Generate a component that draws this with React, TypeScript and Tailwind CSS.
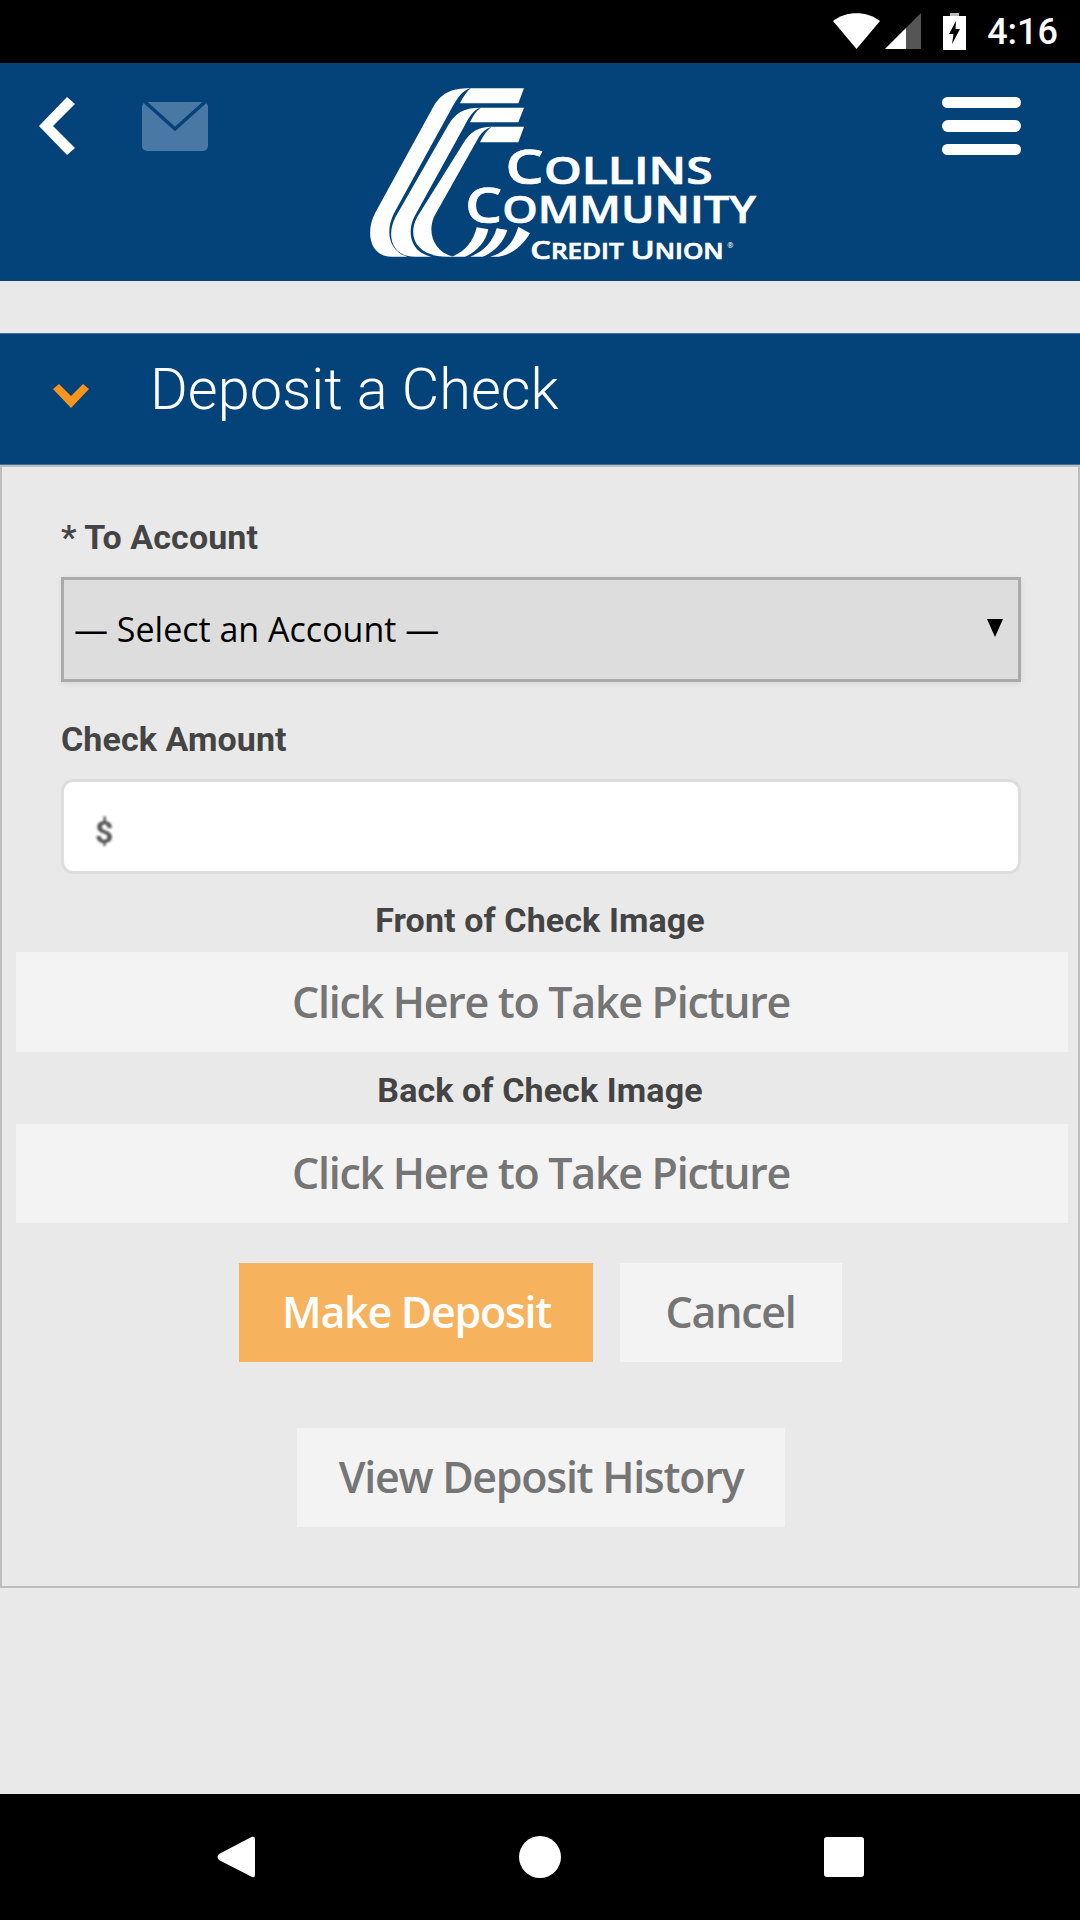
const roboto = 'font-["Roboto",sans-serif]';
const openSans = 'font-["Open_Sans",sans-serif]';

function StatusBar() {
  return (
    <div className="flex h-[63px] shrink-0 items-center justify-end bg-black pr-[22px]">
      <svg width="47" height="36" viewBox="0 0 47 36" className="mt-[-2px]">
        <path d="M0 8 C13 -2.5 34 -2.5 47 8 L23.5 36 Z" fill="#fff" />
      </svg>
      <svg width="36" height="36" viewBox="0 0 36 36" className="ml-[5px] mt-[-1px]">
        <path d="M0 36 L36 0 V36 Z" fill="#555" />
        <path d="M0 36 L21 15 V36 Z" fill="#fff" />
      </svg>
      <svg width="23" height="37" viewBox="0 0 23 37" className="ml-[22px] mt-[-1px]">
        <path d="M7 0 H16 V3 H7 Z" fill="#bbb" />
        <path
          fillRule="evenodd"
          d="M0 3 H23 V37 H0 Z M13 8 L6 21 H10.5 L9 31 L17 16 H12.5 Z"
          fill="#fff"
        />
      </svg>
      <span className={`ml-[21px] text-[36px] leading-none font-medium text-white ${roboto}`}>4:16</span>
    </div>
  );
}

function Logo() {
  const type = { fontFamily: '"Open Sans", sans-serif', fontWeight: 600, fill: '#fff', stroke: '#fff', strokeWidth: 2 };
  return (
    <svg width="420" height="200" viewBox="0 0 1260 600" className="block">
      <g fill="#fff">
        <path d="M362 55 C300 55 275 70 250 110 L75 430 C48 480 55 560 125 560 L172 560 C122 545 102 490 132 430 L302 120 C322 85 335 62 362 55 Z" />
        <path d="M390 113 C340 113 315 130 295 165 L137 440 C110 490 120 560 195 560 L245 560 C185 550 168 490 193 440 L342 170 C357 140 370 120 390 113 Z" />
        <path d="M425 170 C385 170 360 185 340 220 L202 440 C170 500 200 560 290 560 L310 560 C262 550 228 500 252 440 L387 200 C397 185 410 175 425 170 Z" />
        <path d="M330 100 C340 80 350 65 362 55 L522 55 L505 100 Z" />
        <path d="M360 157 C370 135 380 122 392 113 L522 113 L505 157 Z" />
        <path d="M390 217 C400 195 412 180 425 170 L522 170 L505 217 Z" />
        <path d="M305 560 C345 545 370 515 380 472 L415 478 C408 515 378 548 345 560 Z" />
        <path d="M360 560 C402 545 428 515 440 475 L472 480 C462 515 432 548 398 560 Z" />
        <path d="M420 560 C462 550 490 520 505 470 L540 490 C517 530 482 555 445 560 Z" />
      </g>
      <text x="466" y="343" textLength="622" lengthAdjust="spacingAndGlyphs" style={type}>
        <tspan fontSize="142">C</tspan>
        <tspan fontSize="112">OLLINS</tspan>
      </text>
      <text x="345" y="460" textLength="873" lengthAdjust="spacingAndGlyphs" style={type}>
        <tspan fontSize="148">C</tspan>
        <tspan fontSize="114">OMMUNITY</tspan>
      </text>
      <text x="541" y="566" textLength="580" lengthAdjust="spacingAndGlyphs" style={type}>
        <tspan fontSize="78">C</tspan>
        <tspan fontSize="62">REDIT </tspan>
        <tspan fontSize="78">U</tspan>
        <tspan fontSize="62">NION</tspan>
      </text>
      <text x="1132" y="535" fontSize="22" style={{ ...type, strokeWidth: 0 }}>®</text>
    </svg>
  );
}

function AppHeader() {
  return (
    <div className="relative flex h-[218px] shrink-0 items-start bg-[#044379]">
      <svg width="36" height="58" viewBox="0 0 36 58" className="ml-[39px] mt-[34px]">
        <path d="M28 0 L36 7 L14 29 L36 51 L28 58 L0 29 Z" fill="#fff" />
      </svg>
      <svg width="66" height="49" viewBox="0 0 66 49" className="ml-[67px] mt-[39px]">
        <rect x="0" y="0" width="66" height="49" rx="5" fill="#4a78a4" />
        <path d="M3 0 L33 27 L63 0" fill="none" stroke="#044379" strokeWidth="3.5" />
      </svg>
      <div className="absolute left-[350px] top-[7px]">
        <Logo />
      </div>
      <div className="ml-auto mr-[59px] mt-[34px] flex w-[79px] flex-col gap-[12px]">
        <div className="h-[11px] rounded-full bg-white" />
        <div className="h-[12px] rounded-full bg-white" />
        <div className="h-[11px] rounded-full bg-white" />
      </div>
    </div>
  );
}

function FieldLabel({ children, center }: { children: string; center?: boolean }) {
  return (
    <div
      className={`h-[40px] text-[34px] leading-[40px] font-bold tracking-[0.1px] text-[#444] ${roboto} ${center ? 'text-center' : 'ml-[59px]'}`}
    >
      {children}
    </div>
  );
}

function FlatButton({ children, className }: { children: string; className: string }) {
  return (
    <div
      className={`flex items-center justify-center text-[43px] font-semibold tracking-[-1.3px] ${openSans} ${className}`}
    >
      {children}
    </div>
  );
}

export default function App() {
  return (
    <div className="flex h-[1920px] w-[1080px] flex-col overflow-hidden bg-[#e9e9e9]">
      <StatusBar />
      <AppHeader />
      <div className="h-[52px] shrink-0" />

      <div className="flex h-[132px] shrink-0 items-center border-y border-[#3a6f9e] bg-[#044379]">
        <svg width="36" height="24" viewBox="0 0 36 24" className="ml-[53px] mt-[-6px]">
          <path d="M0 5 L6 0 L18 12 L30 0 L36 5 L18 24 Z" fill="#f7941d" />
        </svg>
        <h1 className={`ml-[61px] mt-[-19px] text-[57.7px] font-light text-white ${roboto}`}>Deposit a Check</h1>
      </div>

      <div className="border-2 border-[#bdbdbd] pb-[59px] pt-[50px]">
        <FieldLabel>* To Account</FieldLabel>
        <div className="ml-[59px] mt-[20px] flex h-[105px] w-[960px] items-center justify-between border-[3px] border-[#aaa] bg-[#ddd] pl-[10px] pr-[15px] shadow-[0_2px_6px_rgba(0,0,0,0.08)]">
          <span className={`text-[34px] text-black ${openSans}`}>— Select an Account —</span>
          <svg width="16" height="18" viewBox="0 0 16 18" className="mb-[3px]">
            <path d="M0 0 H16 L8 18 Z" fill="#000" />
          </svg>
        </div>

        <div className="mt-[37px]">
          <FieldLabel>Check Amount</FieldLabel>
        </div>
        <div className="ml-[59px] mt-[20px] flex h-[95px] w-[960px] items-center rounded-[12px] border-[3px] border-[#ddd] bg-white pl-[31px]">
          <span className={`mt-[10px] text-[32px] font-bold text-[#555] blur-[0.8px] ${roboto}`}>$</span>
        </div>

        <div className="mt-[26px]">
          <FieldLabel center>Front of Check Image</FieldLabel>
        </div>
        <FlatButton className="ml-[14px] mr-[10px] mt-[12px] h-[100px] bg-[#f3f3f3] pr-[2px] text-[#757575]">
          Click Here to Take Picture
        </FlatButton>

        <div className="mt-[18px]">
          <FieldLabel center>Back of Check Image</FieldLabel>
        </div>
        <FlatButton className="ml-[14px] mr-[10px] mt-[14px] h-[99px] bg-[#f3f3f3] pr-[2px] text-[#757575]">
          Click Here to Take Picture
        </FlatButton>

        <div className="mt-[40px] flex justify-center gap-[27px]">
          <FlatButton className="h-[99px] w-[354px] bg-[#f6b25c] pl-[2px] text-white">Make Deposit</FlatButton>
          <FlatButton className="h-[99px] w-[222px] bg-[#f3f3f3] text-[#757575]">Cancel</FlatButton>
        </div>

        <FlatButton className="ml-[295px] mt-[66px] h-[99px] w-[488px] bg-[#f3f3f3] text-[#757575]">
          View Deposit History
        </FlatButton>
      </div>

      <div className="mt-auto flex h-[126px] shrink-0 items-center bg-black">
        <svg width="38" height="42" viewBox="0 0 38 42" className="ml-[217px]">
          <path
            d="M35 0.8 Q38 0 38 3 V39 Q38 42 35 41 L2 24 Q-1 21 2 18 Z"
            fill="#fff"
          />
        </svg>
        <div className="ml-[264px] h-[42px] w-[42px] rounded-full bg-white" />
        <div className="ml-[263px] h-[40px] w-[40px] rounded-[3px] bg-white" />
      </div>
    </div>
  );
}
